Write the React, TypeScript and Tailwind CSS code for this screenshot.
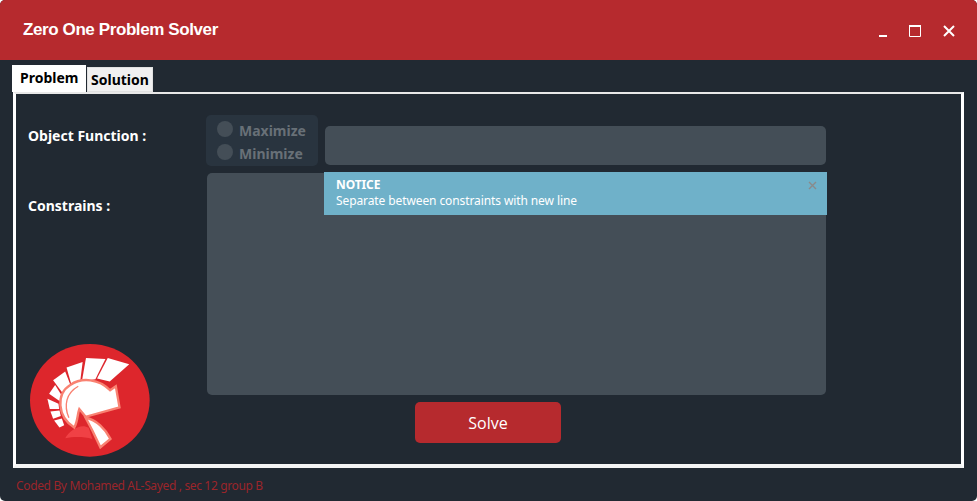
import React from 'react';

const Logo: React.FC = () => (
  <svg viewBox="60 42 358 337" className="w-[120px] h-[113px]">
    <ellipse cx="238.5" cy="210" rx="178.5" ry="168" fill="#dd262c" />
    <g fill="#fff">
      <polygon points="292,84 356,102 298,154 260,145" />
      <polygon points="227,84 285,87 255,147 215,152" />
      <polygon points="169,112 217,96 210,152 184,165" />
      <polygon points="129,150 165,124 183,170 160,192" />
      <polygon points="117,190 135,164 156,198 148,212" />
      <polygon points="112,205 145,220 147,236 119,236" />
      <polygon points="121,243 148,240 152,257 129,265" />
      <polygon points="132,270 155,264 162,284 148,291" />
    </g>
    <path d="M165 323 C180 295 215 278 235 292 L246 325 C220 318 190 318 165 323 Z" fill="#f04145" />
    <path
      d="M316 168 L327 231 L226 259 L207 236 C201 252 203 272 192 291 C140 258 138 190 180 164 C215 140 266 146 299 180 Z"
      fill="#fff"
      stroke="#f98272"
      strokeWidth="7"
      strokeLinejoin="miter"
    />
    <path d="M176 262 C160 225 168 188 204 168" fill="none" stroke="#f98272" strokeWidth="4" />
    <path
      d="M226 262 C258 268 285 295 300 325 L270 350 L246 300 Z"
      fill="#fff"
      stroke="#f98272"
      strokeWidth="7"
    />
  </svg>
);

const App: React.FC = () => {
  return (
    <div className="w-[977px] h-[501px] overflow-hidden bg-[#212932] rounded-[5px] font-['Noto_Sans',sans-serif]">
      <header className="h-[60px] bg-[#b62a2e] flex items-center justify-between pl-[23px] pr-[22px]">
        <h1 className="font-['Liberation_Sans',sans-serif] text-[17px] tracking-[-0.4px] font-bold text-white">Zero One Problem Solver</h1>
        <div className="flex items-center gap-[22px]">
          <svg width="12" height="12" viewBox="0 0 12 12" className="-mr-[2px] mt-px">
            <rect x="2" y="10" width="8" height="2" fill="#fff" />
          </svg>
          <svg width="12" height="12" viewBox="0 0 12 12" className="mt-px">
            <path d="M0.5 1.5H11.5V11.5H0.5Z" fill="none" stroke="#fff" />
            <rect x="0" y="0" width="12" height="2" fill="#fff" />
          </svg>
          <svg width="12" height="12" viewBox="0 0 12 12" className="mt-px">
            <path d="M1 1L11 11M11 1L1 11" fill="none" stroke="#fff" strokeWidth="2" />
          </svg>
        </div>
      </header>

      <div className="pl-[12px] pt-[5px]">
        <div className="flex items-end h-[27px]">
          <div className="h-[27px] w-[74px] bg-white text-black text-[14px] font-bold pl-[8px] pt-[2px] leading-[22px]">Problem</div>
          <div className="h-[25px] w-[66px] ml-px bg-[#f0f0f0] border border-[#e0e0e0] text-black text-[14px] font-bold text-center leading-[24px]">Solution</div>
        </div>

        <div className="relative ml-px flex h-[376px] w-[951px] border-x-[3px] border-t-[2px] border-b-[4px] border-white border-t-[#e8e8e8] border-b-[#f4f4f4]">
          <aside className="w-[191px] pl-[12px] flex flex-col">
            <p className="mt-[32px] text-[14px] font-bold text-white leading-5">Object Function :</p>
            <p className="mt-[50px] text-[14px] font-bold text-white leading-5">Constrains :</p>
            <div className="mt-auto mb-[7px] ml-[2px]">
              <Logo />
            </div>
          </aside>

          <main className="w-[619px] flex flex-col">
            <div className="flex items-end h-[72px]">
              <div className="w-[112px] h-[51px] -ml-px bg-[#29343f] rounded-[5px] pl-[11px] pt-[4px] text-[14px] font-bold text-[#687077]">
                <div className="flex items-center gap-[6px] h-[23px]">
                  <span className="w-[16px] h-[16px] rounded-full bg-[#444e57] -mt-[3px]" />
                  <span>Maximize</span>
                </div>
                <div className="flex items-center gap-[6px] h-[23px]">
                  <span className="w-[16px] h-[16px] rounded-full bg-[#444e57] -mt-[3px]" />
                  <span>Minimize</span>
                </div>
              </div>
              <div className="ml-[7px] w-[501px] h-[39px] mb-px bg-[#444e57] rounded-[5px]" />
            </div>
            <div className="mt-[7px] h-[222px] bg-[#444e57] rounded-[5px]" />
            <button className="mt-[7px] ml-[208px] w-[146px] h-[41px] bg-[#b62a2e] rounded-[5px] text-white text-[16px] font-['Open_Sans',sans-serif]">Solve</button>
          </main>

          <div className="absolute left-[308px] top-[78px] w-[503px] h-[43px] bg-[#6fb1c9] text-white pl-[12px] pt-[5px] text-[12px] tracking-[-0.1px] leading-[16px]">
            <p className="font-bold">NOTICE</p>
            <p>Separate between constraints with new line</p>
            <svg width="9" height="9" viewBox="0 0 9 9" className="absolute right-[10px] top-[9px]">
              <path d="M1 1L8 8M8 1L1 8" fill="none" stroke="#8a8a8a" strokeWidth="1.4" />
            </svg>
          </div>
        </div>

        <p className="mt-[10px] pl-[4px] text-[12px] tracking-[-0.35px] leading-[16px] text-[#9b252a]">Coded By Mohamed AL-Sayed , sec 12 group B</p>
      </div>
    </div>
  );
};

export default App;
